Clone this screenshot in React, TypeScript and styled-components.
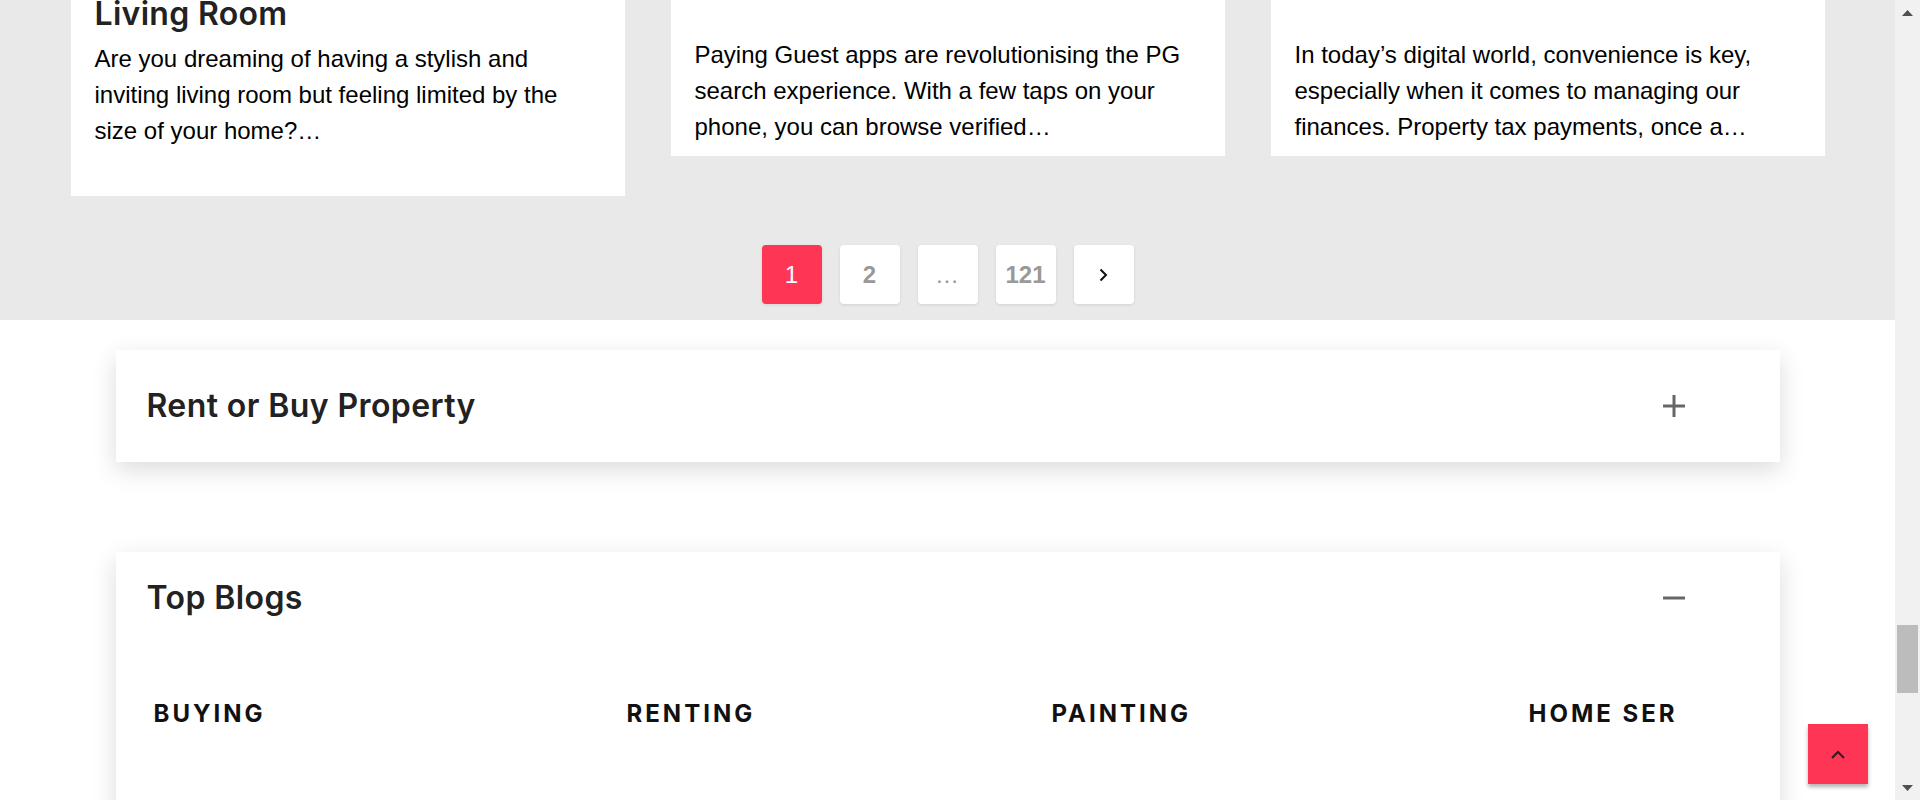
import React, { useLayoutEffect, useRef } from 'react';
import styled, { createGlobalStyle } from 'styled-components';

const GlobalStyle = createGlobalStyle`
	* {
		box-sizing: border-box;
	}

	html,
	body {
		margin: 0;
		height: 100%;
		overflow: hidden;
	}

	body {
		font-family: 'Liberation Sans', Arial, sans-serif;
		background: #fff;
		color: #000;
	}
`;

const Page = styled.div`
	display: flex;
	height: 100vh;
`;

const Scroller = styled.div`
	flex: 1;
	min-width: 0;
	overflow-y: scroll;
	scrollbar-width: none;

	&::-webkit-scrollbar {
		display: none;
	}
`;

const Rail = styled.aside`
	width: 25px;
	flex-shrink: 0;
	display: flex;
	flex-direction: column;
	background: #f1f1f1;
`;

const RailButton = styled.div`
	height: 25px;
	display: flex;
	align-items: center;
	justify-content: center;
`;

const RailTrack = styled.div`
	flex: 1;
	position: relative;
`;

const RailThumb = styled.div<{ $top: number; $height: number }>`
	position: absolute;
	left: 2px;
	right: 2px;
	top: ${(p) => p.$top}px;
	height: ${(p) => p.$height}px;
	background: #bcbcbc;
`;

const Hero = styled.header`
	background: #1e2738;
	color: #fff;
	padding: 140px 70px 120px;
`;

const HeroTitle = styled.h1`
	margin: 0 0 16px;
	font: 600 56px/1.2 Inter, 'Noto Sans', sans-serif;
`;

const HeroText = styled.p`
	margin: 0;
	font-size: 22px;
	line-height: 1.6;
	color: #c9cfdb;
`;

const BlogSection = styled.section`
	background: #e9e9e9;
	padding: 46px 0 16px;
`;

const CardGrid = styled.div`
	display: grid;
	grid-template-columns: repeat(3, 554px);
	column-gap: 46px;
	row-gap: 46px;
	justify-content: center;
	align-items: start;
`;

const Card = styled.article`
	background: #fff;
	padding: 0 24px 11px;
`;

const CardImage = styled.div<{ $tone: string }>`
	height: 320px;
	margin: 0 -24px 20px;
	background: linear-gradient(135deg, ${(p) => p.$tone}, #d9dde3);
`;

const CardTitle = styled.h3`
	margin: 0;
	height: 72px;
	overflow: hidden;
	white-space: pre-line;
	font: 600 32px/36px Inter, 'Noto Sans', sans-serif;
	letter-spacing: 0.3px;
	color: #222;
`;

const CardText = styled.p<{ $rows: number }>`
	margin: ${(p) => (p.$rows > 3 ? 9 : 5)}px 0 0;
	min-height: ${(p) => p.$rows * 36}px;
	font-size: 24px;
	line-height: 36px;
	color: #000;
`;

const Pager = styled.nav`
	display: flex;
	justify-content: center;
	gap: 18px;
	margin-top: 49px;
`;

const PageButton = styled.button<{ $active?: boolean }>`
	width: 60px;
	height: 59px;
	display: flex;
	align-items: center;
	justify-content: center;
	border: 0;
	border-radius: 4px;
	padding: 0;
	background: ${(p) => (p.$active ? '#ff3556' : '#fff')};
	color: ${(p) => (p.$active ? '#fff' : '#999')};
	font-family: 'Liberation Sans', Arial, sans-serif;
	font-size: 24px;
	font-weight: ${(p) => (p.$active ? 400 : 700)};
	box-shadow: 0 1px 3px rgba(0, 0, 0, 0.1);
	cursor: pointer;
`;

const Dots = styled.span`
	font-weight: 400;
	letter-spacing: 1px;
`;

const InfoSection = styled.section`
	padding: 30px 0 80px;
	display: flex;
	flex-direction: column;
	align-items: center;
	gap: 90px;
`;

const Accordion = styled.div`
	width: 1664px;
	background: #fff;
	box-shadow: 0 8px 24px rgba(0, 0, 0, 0.14);
`;

const AccordionHeader = styled.div<{ $open?: boolean }>`
	display: flex;
	align-items: center;
	justify-content: space-between;
	padding: ${(p) => (p.$open ? '28px 95px 28px 31px' : '38px 95px 38px 31px')};
	cursor: pointer;
`;

const AccordionTitle = styled.h2`
	margin: 0;
	font: 600 32px/36px Inter, 'Noto Sans', sans-serif;
	letter-spacing: 0.4px;
	color: #222;
`;

const TabRow = styled.div`
	display: grid;
	grid-template-columns: 473px 425px 477px minmax(0, 1fr);
	padding: 52px 104px 0 38px;
`;

const TabColumn = styled.div`
	overflow: hidden;
`;

const TabLabel = styled.h4`
	margin: 0;
	white-space: nowrap;
	font: 700 24px/36px Inter, 'Noto Sans', sans-serif;
	letter-spacing: 3px;
	text-transform: uppercase;
	color: #111;
`;

const LinkList = styled.ul`
	list-style: none;
	margin: 0;
	padding: 90px 0 60px;
	display: flex;
	flex-direction: column;
	gap: 18px;
`;

const BlogLink = styled.a`
	font-size: 18px;
	color: #444;
	text-decoration: none;
	white-space: nowrap;
`;

const Footer = styled.footer`
	background: #1e2738;
	color: #c9cfdb;
	padding: 60px 115px;
	font-size: 18px;
`;

const BackToTop = styled.button`
	position: fixed;
	right: 52px;
	bottom: 16px;
	width: 60px;
	height: 60px;
	border: 0;
	padding: 0;
	display: flex;
	align-items: center;
	justify-content: center;
	background: #ff3556;
	box-shadow: 0 3px 4px rgba(0, 0, 0, 0.3);
	cursor: pointer;
`;

type Blog = { title: string; text: string; tone: string; rows?: number };

const blogs: Blog[] = [
	{ title: 'Home Loan Eligibility\nExplained', text: 'Buying your first home is a big milestone, and knowing how much a bank will lend you is the first step…', tone: '#9fb4c7' },
	{ title: 'Vastu Tips for a New Home', text: 'Planning the layout of a new home? Simple Vastu principles can help you bring balance and positivity…', tone: '#c7b39f' },
	{ title: 'Rent Agreement Checklist', text: 'Before you sign a rent agreement, make sure every clause protects you as a tenant and your landlord…', tone: '#a7c79f' },
	{ title: 'Monsoon Home Care Guide', text: 'Heavy rains can take a toll on walls, roofs and wooden furniture. Here is how to keep your home safe…', tone: '#9fa7c7' },
	{ title: 'Choosing a Paint Finish', text: 'Matte, satin or gloss? The finish you pick changes how a colour looks and how long your walls last…', tone: '#c79fb8' },
	{ title: 'Top Localities in Pune', text: 'Pune has grown into one of the most sought-after cities for young professionals and families alike…', tone: '#c7c29f' },
	{ title: 'Stamp Duty Across States', text: 'Stamp duty and registration charges vary from state to state and can add a lot to your budget…', tone: '#9fc7c3' },
	{ title: 'Modular Kitchen Ideas', text: 'A well planned modular kitchen saves space, time and effort while looking clean and modern every day…', tone: '#b99fc7' },
	{ title: 'Packers and Movers Tips', text: 'Shifting homes can be stressful. With the right movers and a clear plan, the whole day gets easier…', tone: '#c7a99f' },
	{
		title: 'Decor Ideas for a Small\nLiving Room',
		text: 'Are you dreaming of having a stylish and inviting living room but feeling limited by the size of your home?…',
		tone: '#b7c79f',
		rows: 4,
	},
	{
		title: 'Top PG Apps in India',
		text: 'Paying Guest apps are revolutionising the PG search experience. With a few taps on your phone, you can browse verified…',
		tone: '#9fbdc7',
	},
	{
		title: 'Pay Property Tax Online',
		text: 'In today’s digital world, convenience is key, especially when it comes to managing our finances. Property tax payments, once a…',
		tone: '#c7b89f',
	},
];

const topBlogs = [
	{ label: 'Buying', links: ['Home loan guide', 'Ready to move flats', 'Property documents'] },
	{ label: 'Renting', links: ['Rent agreement format', 'Security deposit rules', 'PG vs flat'] },
	{ label: 'Painting', links: ['Wall colour ideas', 'Texture painting', 'Waterproofing'] },
	{ label: 'Home Services', links: ['Deep cleaning', 'Packers and movers', 'Pest control'] },
];

// where the page sits in its long scroll, as the reference shows it
const scrollThumb = { top: 600, height: 68 };

const PlusIcon: React.FC<{ open?: boolean }> = ({ open }) => (
	<svg width="22" height="22" viewBox="0 0 22 22" aria-hidden="true">
		<path d="M0 11H22" stroke="#666" strokeWidth="3" />
		{!open && <path d="M11 0V22" stroke="#666" strokeWidth="3" />}
	</svg>
);

const Arrow: React.FC<{ down?: boolean }> = ({ down }) => (
	<svg width="11" height="6" viewBox="0 0 11 6" aria-hidden="true">
		<polygon points={down ? '0,0 11,0 5.5,6' : '0,6 11,6 5.5,0'} fill="#505050" />
	</svg>
);

export const App: React.FC = () => {
	const scrollerRef = useRef<HTMLDivElement>(null);
	const pagerRef = useRef<HTMLElement>(null);

	useLayoutEffect(() => {
		const scroller = scrollerRef.current;
		const pager = pagerRef.current;
		if (!scroller || !pager) return;
		const offset = pager.getBoundingClientRect().top - scroller.getBoundingClientRect().top;
		scroller.scrollTop = scroller.scrollTop + offset - 245;
	}, []);

	return (
		<Page>
			<GlobalStyle />
			<Scroller ref={scrollerRef}>
				<Hero>
					<HeroTitle>Real Estate Blogs</HeroTitle>
					<HeroText>News, guides and ideas on buying, renting, painting and home services.</HeroText>
				</Hero>

				<BlogSection>
					<CardGrid>
						{blogs.map((blog) => (
							<Card key={blog.title}>
								<CardImage $tone={blog.tone} />
								<CardTitle>{blog.title}</CardTitle>
								<CardText $rows={blog.rows ?? 3}>{blog.text}</CardText>
							</Card>
						))}
					</CardGrid>

					<Pager ref={pagerRef}>
						<PageButton $active>1</PageButton>
						<PageButton>2</PageButton>
						<PageButton>
							<Dots>…</Dots>
						</PageButton>
						<PageButton>121</PageButton>
						<PageButton aria-label="Next page">
							<svg width="9" height="14" viewBox="0 0 9 14" aria-hidden="true">
								<polyline points="1.5,1.5 7,7 1.5,12.5" fill="none" stroke="#111" strokeWidth="2" />
							</svg>
						</PageButton>
					</Pager>
				</BlogSection>

				<InfoSection>
					<Accordion>
						<AccordionHeader>
							<AccordionTitle>Rent or Buy Property</AccordionTitle>
							<PlusIcon />
						</AccordionHeader>
					</Accordion>

					<Accordion>
						<AccordionHeader $open>
							<AccordionTitle>Top Blogs</AccordionTitle>
							<PlusIcon open />
						</AccordionHeader>
						<TabRow>
							{topBlogs.map((group) => (
								<TabColumn key={group.label}>
									<TabLabel>{group.label}</TabLabel>
									<LinkList>
										{group.links.map((link) => (
											<li key={link}>
												<BlogLink href="#">{link}</BlogLink>
											</li>
										))}
									</LinkList>
								</TabColumn>
							))}
						</TabRow>
					</Accordion>
				</InfoSection>

				<Footer>© Real Estate Blogs. All rights reserved.</Footer>
			</Scroller>

			<Rail>
				<RailButton>
					<Arrow />
				</RailButton>
				<RailTrack>
					<RailThumb $top={scrollThumb.top} $height={scrollThumb.height} />
				</RailTrack>
				<RailButton>
					<Arrow down />
				</RailButton>
			</Rail>

			<BackToTop aria-label="Back to top">
				<svg width="14" height="9" viewBox="0 0 14 9" aria-hidden="true">
					<polyline points="1,8 7,2 13,8" fill="none" stroke="#222" strokeWidth="2" />
				</svg>
			</BackToTop>
		</Page>
	);
};

export default App;
